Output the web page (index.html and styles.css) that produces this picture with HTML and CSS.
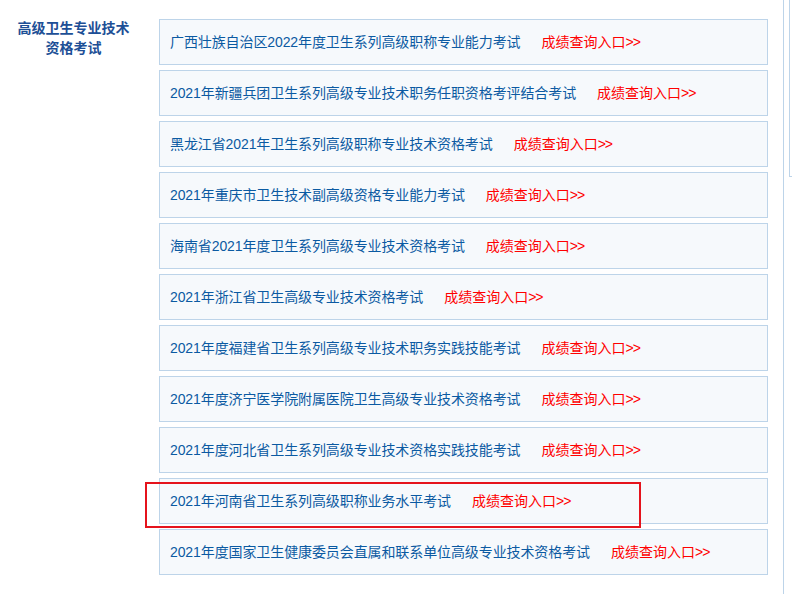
FILE: index.html
```html
<!DOCTYPE html>
<html lang="zh-CN">
<head>
<meta charset="utf-8">
<title>高级卫生专业技术资格考试</title>
<link rel="stylesheet" href="styles.css">
</head>
<body>
<div class="page">
  <aside class="side">
    <h2 class="side-title">高级卫生专业技术<br>资格考试</h2>
  </aside>
  <main class="list">
    <div class="item"><span class="name">广西壮族自治区2022年度卫生系列高级职称专业能力考试</span><a class="link">成绩查询入口<span class="arr">&gt;&gt;</span></a></div>
    <div class="item"><span class="name">2021年新疆兵团卫生系列高级专业技术职务任职资格考评结合考试</span><a class="link">成绩查询入口<span class="arr">&gt;&gt;</span></a></div>
    <div class="item"><span class="name">黑龙江省2021年卫生系列高级职称专业技术资格考试</span><a class="link">成绩查询入口<span class="arr">&gt;&gt;</span></a></div>
    <div class="item"><span class="name">2021年重庆市卫生技术副高级资格专业能力考试</span><a class="link">成绩查询入口<span class="arr">&gt;&gt;</span></a></div>
    <div class="item"><span class="name">海南省2021年度卫生系列高级专业技术资格考试</span><a class="link">成绩查询入口<span class="arr">&gt;&gt;</span></a></div>
    <div class="item"><span class="name">2021年浙江省卫生高级专业技术资格考试</span><a class="link">成绩查询入口<span class="arr">&gt;&gt;</span></a></div>
    <div class="item"><span class="name">2021年度福建省卫生系列高级专业技术职务实践技能考试</span><a class="link">成绩查询入口<span class="arr">&gt;&gt;</span></a></div>
    <div class="item"><span class="name">2021年度济宁医学院附属医院卫生高级专业技术资格考试</span><a class="link">成绩查询入口<span class="arr">&gt;&gt;</span></a></div>
    <div class="item"><span class="name">2021年度河北省卫生系列高级专业技术资格实践技能考试</span><a class="link">成绩查询入口<span class="arr">&gt;&gt;</span></a></div>
    <div class="item marked"><span class="name">2021年河南省卫生系列高级职称业务水平考试</span><a class="link">成绩查询入口<span class="arr">&gt;&gt;</span></a><span class="highlight"></span></div>
    <div class="item"><span class="name">2021年度国家卫生健康委员会直属和联系单位高级专业技术资格考试</span><a class="link">成绩查询入口<span class="arr">&gt;&gt;</span></a></div>
  </main>
  <div class="rail"></div>
  <div class="edge"><div class="edge-box"></div></div>
</div>
</body>
</html>
```
FILE: styles.css
```css
html, body {
  margin: 0;
  padding: 0;
  background: #ffffff;
}
body {
  font-family: "Liberation Sans", "Noto Sans CJK SC", sans-serif;
  font-size: 14px;
  overflow: hidden;
}
.page {
  display: flex;
  align-items: stretch;
  height: 594px;
}
.side {
  width: 147px;
  flex: none;
  padding-top: 18px;
}
.side-title {
  margin: 0;
  font-size: 14px;
  line-height: 20px;
  font-weight: bold;
  color: #1d4f96;
  text-align: center;
}
.list {
  margin-left: 12px;
  width: 609px;
  flex: none;
  padding-top: 19px;
  display: flex;
  flex-direction: column;
  gap: 5px;
}
.item {
  position: relative;
  box-sizing: border-box;
  height: 46px;
  border: 1px solid #bdd4e9;
  background: #f6f9fc;
  padding-left: 10px;
  padding-bottom: 2px;
  display: flex;
  align-items: center;
  white-space: nowrap;
}
.name {
  color: #0b5aa2;
  letter-spacing: -0.1px;
}
.link {
  color: #ff0000;
  margin-left: 21px;
  cursor: pointer;
}
.arr {
  letter-spacing: -1px;
}
.highlight {
  position: absolute;
  left: -15px;
  top: 3px;
  width: 496px;
  height: 46px;
  box-sizing: border-box;
  border: 2px solid #e5131c;
  pointer-events: none;
}
.rail {
  margin-left: 15px;
  width: 0;
  border-left: 1px solid #bdd4e9;
  flex: none;
}
.edge {
  margin-left: 5px;
  flex: 1;
}
.edge-box {
  height: 177px;
  box-sizing: border-box;
  border-left: 1px solid #bdd4e9;
  border-bottom: 1px solid #bdd4e9;
}
```
